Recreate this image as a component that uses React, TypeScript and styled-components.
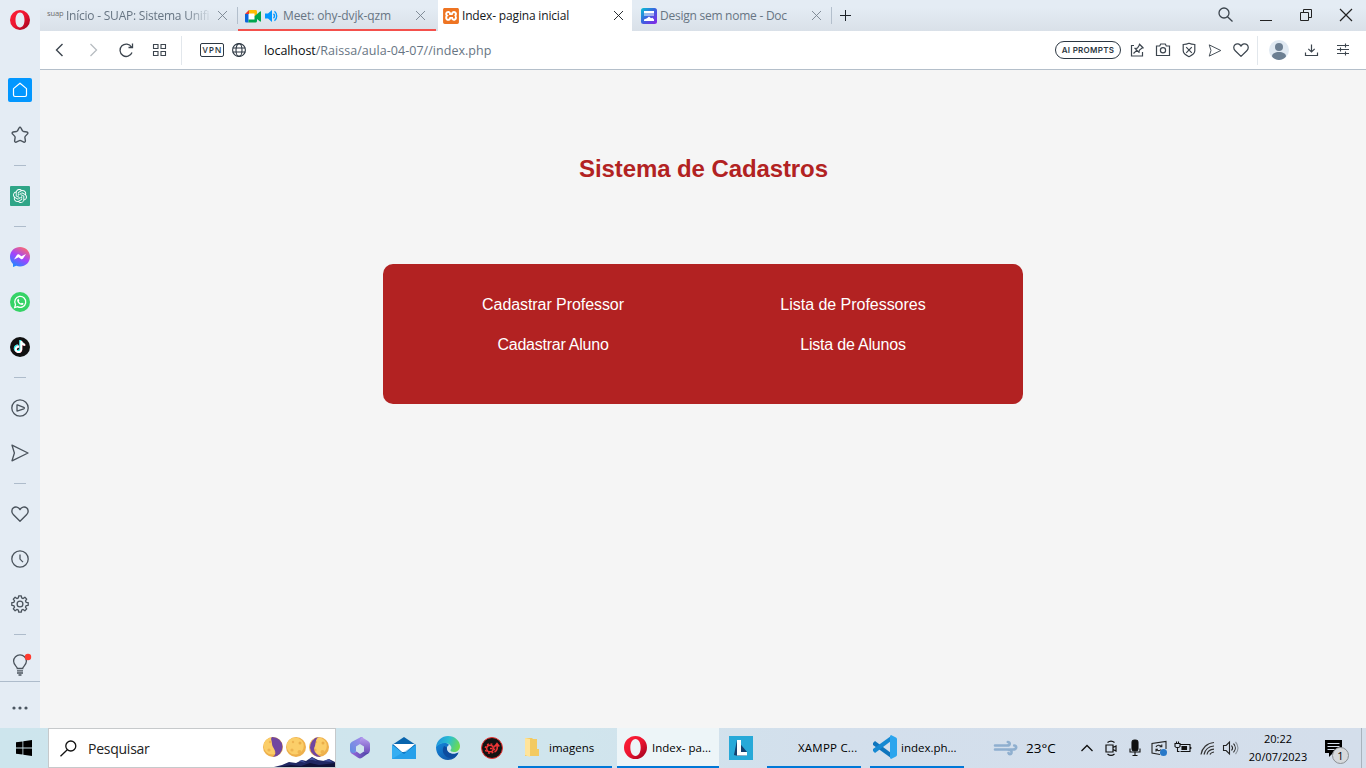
import React from 'react';
import styled, { createGlobalStyle, css } from 'styled-components';
import { SiOpenai, SiXampp, SiTiktok } from 'react-icons/si';

const GlobalStyle = createGlobalStyle`
  * { box-sizing: border-box; }
  body { margin: 0; overflow: hidden; font-family: "Open Sans", "Noto Sans", sans-serif; }
`;

const Desktop = styled.div`
  display: grid;
  grid-template-rows: 728px 40px;
  width: 1366px;
  height: 768px;
`;

const Browser = styled.div`
  display: grid;
  grid-template-columns: 40px 1fr;
  background: #e4ecf4;
`;

const Icon = styled.svg<{ $size?: number; $width?: number; $color?: string; $line?: number }>`
  display: block;
  flex: none;
  width: ${p => p.$width ?? p.$size ?? 16}px;
  height: ${p => p.$size ?? 16}px;
  fill: none;
  stroke: ${p => p.$color ?? '#3c454e'};
  stroke-width: ${p => p.$line ?? 1.2};
  overflow: visible;
`;

const Picture = styled(Icon)`
  stroke: none;
`;

/* ---------- sidebar ---------- */

const Sidebar = styled.aside`
  display: flex;
  flex-direction: column;
`;

const SideItem = styled.div<{ $h: number; $top?: number; $nudge?: boolean }>`
  display: flex;
  align-items: center;
  justify-content: center;
  height: ${p => p.$h}px;
  margin-top: ${p => p.$top ?? 0}px;
  padding-right: ${p => (p.$nudge ? 1 : 0)}px;
`;

const SideDivider = styled.div<{ $h: number }>`
  display: flex;
  align-items: center;
  justify-content: center;
  height: ${p => p.$h}px;
  &::before {
    content: '';
    width: 12px;
    height: 1px;
    background: #aebccb;
  }
`;

const HomeTile = styled.div`
  display: grid;
  place-items: center;
  width: 24px;
  height: 24px;
  border-radius: 2px;
  background: #0297ff;
`;

const AppTile = styled.div<{ $bg: string; $round?: boolean }>`
  display: grid;
  place-items: center;
  width: 20px;
  height: 20px;
  border-radius: ${p => (p.$round ? '50%' : '1px')};
  background: ${p => p.$bg};
  color: #fff;
`;

const TikTokGlyph = styled(SiTiktok)`
  filter: drop-shadow(-0.6px -0.4px 0 #25f4ee) drop-shadow(0.7px 0.5px 0 #fe2c55);
`;

const MoreBar = styled.div`
  display: flex;
  align-items: center;
  justify-content: center;
  height: 47px;
  padding-top: 6px;
  border-top: 1px solid #aebccb;
`;

/* ---------- tab strip ---------- */

const Column = styled.div`
  display: grid;
  grid-template-rows: 31px 39px 1fr;
  min-width: 0;
`;

const TabStrip = styled.div`
  display: flex;
  background: linear-gradient(#e4ecf4 25%, #d9e0e8);
`;

const Tab = styled.div<{ $w: number; $left: number; $right: number; $active?: boolean; $alert?: boolean; $divider?: boolean }>`
  position: relative;
  display: flex;
  align-items: center;
  width: ${p => p.$w}px;
  height: 31px;
  padding: 0 ${p => p.$right}px 0 ${p => p.$left}px;
  color: ${p => (p.$active ? '#14181c' : '#677583')};
  ${p => p.$active && css`background: #fff;`}
  ${p => p.$alert && css`
    margin-right: 2px;
    box-shadow: inset 0 -2px #f4504c;
  `}
  ${p => p.$divider && css`
    &::after {
      content: '';
      position: absolute;
      right: 0;
      top: 7px;
      width: 1px;
      height: 17px;
      background: #b3bfcc;
    }
  `}
`;

const TabTitle = styled.span<{ $gap: number; $ls: number; $fade?: boolean }>`
  flex: 1;
  margin-left: ${p => p.$gap}px;
  font-size: 12px;
  line-height: 16px;
  letter-spacing: ${p => p.$ls}px;
  white-space: nowrap;
  overflow: hidden;
  ${p => p.$fade && css`
    margin-right: 8px;
    mask-image: linear-gradient(90deg, #000 82%, transparent 102%);
  `}
`;

const SuapMark = styled.span`
  width: 17px;
  margin-bottom: 5px;
  color: #6d6d6d;
  font-size: 7.5px;
  line-height: 10px;
  letter-spacing: -0.1px;
`;

const NewTab = styled.div`
  display: flex;
  align-items: center;
  padding-left: 8px;
`;

const WindowButtons = styled.div`
  display: flex;
  align-items: center;
  justify-content: space-between;
  width: 134px;
  height: 30px;
  margin-left: auto;
  margin-right: 14px;
`;

/* ---------- address bar ---------- */

const AddressBar = styled.div`
  display: flex;
  align-items: center;
  background: #fff;
  border-bottom: 1px solid #b4bfca;
`;

const NavGroup = styled.div`
  display: flex;
  gap: 17px;
  width: 142px;
  height: 29px;
  align-items: center;
  padding-left: 12px;
  border-right: 1px solid #e2e7ec;
`;

const VpnBadge = styled.span`
  width: 24px;
  height: 14px;
  margin: 0 8px 0 18px;
  border: 1px solid #2c3742;
  border-radius: 2px;
  color: #2c3742;
  font-size: 8.5px;
  font-weight: 600;
  line-height: 12px;
  letter-spacing: 0.9px;
  text-align: center;
  text-indent: 1px;
`;

const Url = styled.span`
  margin-left: 18px;
  padding-top: 2px;
  color: #677583;
  font-size: 12.5px;
  line-height: 18px;
  white-space: nowrap;
  letter-spacing: 0.04px;
`;

const Host = styled.span`
  color: #0b0e11;
  letter-spacing: -0.08px;
`;

const PageActions = styled.div`
  display: flex;
  align-items: center;
  gap: 10px;
  height: 29px;
  margin-left: auto;
  padding-right: 8px;
  border-right: 1px solid #e2e7ec;
`;

const PromptPill = styled.span`
  width: 66px;
  height: 18px;
  margin-right: -2px;
  border: 1px solid #2c3742;
  border-radius: 9px;
  color: #2c3742;
  font-family: Inter, sans-serif;
  font-size: 8px;
  font-weight: 600;
  line-height: 16px;
  letter-spacing: 0.3px;
  text-align: center;
`;

const ProfileActions = styled.div`
  display: flex;
  align-items: center;
  width: 108px;
  padding-left: 11px;
  gap: 15px;
`;

/* ---------- web page ---------- */

const Page = styled.main`
  display: flex;
  flex-direction: column;
  align-items: center;
  background: #f5f5f5;
  font-family: "Liberation Sans", Arial, sans-serif;
`;

const Heading = styled.h1`
  margin: 85px 0 0 1px;
  color: #b22222;
  font-size: 24px;
  line-height: 28px;
  letter-spacing: -0.1px;
`;

const LinkPanel = styled.nav`
  display: grid;
  grid-template-columns: 300px 300px;
  grid-auto-rows: 40px;
  width: 640px;
  height: 140px;
  margin-top: 81px;
  padding: 21px 20px 19px;
  border-radius: 10px;
  background: #b22222;
`;

const PanelLink = styled.a<{ $ls: number }>`
  color: #fff;
  font-size: 16px;
  line-height: 40px;
  letter-spacing: ${p => p.$ls}px;
  text-align: center;
`;

/* ---------- taskbar ---------- */

const Taskbar = styled.footer`
  display: flex;
  align-items: center;
  background: linear-gradient(90deg, #cde5ed, #d0e5ed 42%, #d3dfec 60%, #d4deeb);
`;

const StartButton = styled.div`
  display: flex;
  justify-content: center;
  width: 48px;
`;

const SearchBox = styled.div`
  display: flex;
  align-items: center;
  width: 288px;
  height: 40px;
  padding-left: 11px;
  border: 1px solid #c6c9cb;
  background: #fff;
  color: #222;
`;

const SearchLabel = styled.span`
  flex: 1;
  margin-left: 11px;
  padding-top: 1px;
  font-size: 14px;
  line-height: 20px;
  letter-spacing: -0.25px;
`;

const PinnedApps = styled.div`
  display: flex;
  align-items: center;
  gap: 20px;
  width: 182px;
  padding-left: 12px;
`;

const TaskButton = styled.div<{ $w: number; $pad: number; $before?: number; $after?: number; $open?: boolean }>`
  display: flex;
  align-items: center;
  width: ${p => p.$w}px;
  height: 40px;
  padding-left: ${p => p.$pad}px;
  margin-left: ${p => p.$before ?? 0}px;
  margin-right: ${p => p.$after ?? 0}px;
  border-bottom: 2px solid #0078d7;
  background: ${p => (p.$open ? '#edf5f8' : 'transparent')};
`;

const TaskLabel = styled.span<{ $gap: number; $ls?: number }>`
  margin-left: ${p => p.$gap}px;
  padding-top: 1px;
  color: #000;
  font-size: 11.5px;
  line-height: 16px;
  letter-spacing: ${p => p.$ls ?? 0}px;
  white-space: nowrap;
`;

const Weather = styled.div`
  display: flex;
  align-items: center;
  gap: 8px;
  margin-left: 30px;
  font-size: 13.5px;
  line-height: 18px;
`;

const Tray = styled.div`
  display: flex;
  align-items: center;
  gap: 8px;
  margin-left: auto;
`;

const Clock = styled.div`
  width: 74px;
  margin-left: -6px;
  font-size: 11px;
  line-height: 18px;
  text-align: center;
  white-space: nowrap;
`;

const Notifications = styled.div`
  position: relative;
  width: 41px;
  height: 40px;
  margin-left: 6px;
  padding: 12px 0 0 4px;
  border-right: 1px solid #a9b3bd;
  margin-right: 4px;
`;

const NotificationCount = styled.span`
  position: absolute;
  left: 11px;
  top: 19px;
  width: 17px;
  height: 17px;
  border: 1px solid #8c9094;
  border-radius: 50%;
  background: #d6d9dc;
  font-size: 11px;
  line-height: 15px;
  text-align: center;
`;

const OperaLogo = ({ size }: { size: number }) => (
  <Picture $size={size} viewBox="0 0 20 20">
    <defs>
      <linearGradient id="opera" x1="0" x2="1" y1="0" y2="1">
        <stop offset="0" stopColor="#ff2038" />
        <stop offset="0.5" stopColor="#ec1530" />
        <stop offset="1" stopColor="#97001c" />
      </linearGradient>
    </defs>
    <path fill="url(#opera)" fillRule="evenodd" d="M10 0a10 10 0 1 0 0 20 10 10 0 0 0 0-20Zm0 2.600c2.800 0 4.500 3.300 4.500 7.400s-1.700 7.400-4.500 7.400S5.500 14.100 5.500 10s1.700-7.400 4.500-7.400Z" />
  </Picture>
);

const Cross = ({ color, size = 9 }: { color?: string; size?: number }) => (
  <Icon $size={size} $color={color} $line={1} viewBox="0 0 10 10">
    <path d="m0 0 10 10M10 0 0 10" />
  </Icon>
);

const Heart = ({ size, color }: { size: number; color?: string }) => (
  <Icon $size={size} $color={color} viewBox="0 0 18 18" $line={1.4}>
    <path d="M9 16.200 2.500 9.800C.2 7.500.5 4.600 2.200 3.100 4.300 1.200 7.600 1.900 9 4.600c1.400-2.700 4.700-3.400 6.800-1.500 1.700 1.500 2 4.400-.3 6.700Z" strokeLinejoin="round" />
  </Icon>
);

const SendArrow = ({ size, width, color }: { size: number; width?: number; color?: string }) => (
  <Icon $size={size} $width={width} $color={color} viewBox="0 0 18 18" $line={1.3}>
    <path d="M1 1.200 17 9 1 16.800 3.400 9Z" strokeLinejoin="round" />
  </Icon>
);

const Moon = ({ x, shade }: { x: number; shade?: string }) => (
  <g transform={`translate(${x} 18)`}>
    <circle r="10" fill="#eeb04c" />
    <circle cx="-.8" cy="-1" r="8.600" fill="#fbce69" />
    <circle cx="-4" cy="3" r="1.600" fill="#eeb451" />
    <circle cx="4" cy="-4" r="1.500" fill="#e9ad49" />
    <circle cx="3.500" cy="5" r="2" fill="#efb44f" />
    <circle cx="-3" cy="-5" r="1.200" fill="#eeb451" />
    {shade && <path d={shade} fill="#7146a0" />}
  </g>
);

const toothPoints = Array.from({ length: 32 }, (_, i) => {
  const step = i % 4;
  const radius = step === 0 || step === 1 ? 8.3 : 6.3;
  const angle = ((Math.floor(i / 4) * 45 + [-9, 9, 15, 30][step] - 90) * Math.PI) / 180;
  return `${(9 + radius * Math.cos(angle)).toFixed(2)},${(9 + radius * Math.sin(angle)).toFixed(2)}`;
}).join(' ');

const sideInk = '#4a535c';

function SidePanel() {
  return (
    <Sidebar>
      <SideItem $h={40}><OperaLogo size={20} /></SideItem>
      <SideItem $h={44} $top={28}>
        <HomeTile>
          <Icon $size={16} $color="#fff" $line={1.2} viewBox="0 0 16 16">
            <path d="M1.500 6.600 8 1.200l6.500 5.400v6.500c0 .9-.6 1.400-1.400 1.400H2.900c-.8 0-1.400-.5-1.400-1.400Z" strokeLinejoin="round" />
          </Icon>
        </HomeTile>
      </SideItem>
      <SideItem $h={46}>
        <Icon $size={18} $color={sideInk} viewBox="0 0 18 18" $line={1.4}>
          <path d="M8.100 1.800c.4-.8 1.400-.8 1.800 0l1.600 3c.2.400.6.700 1 .7l3.400.5c1 .2 1.300 1.200.6 1.900l-2.300 2.500c-.3.300-.4.800-.3 1.200l.5 3.300c.1 1-.8 1.600-1.600 1.200l-3-1.400a1.700 1.700 0 0 0-1.500 0l-3.100 1.400c-.8.400-1.700-.2-1.600-1.200l.5-3.300c.1-.4 0-.9-.3-1.200L1.500 7.900C.8 7.200 1.100 6.200 2.100 6l3.400-.5c.4 0 .8-.3 1-.7Z" strokeLinejoin="round" />
        </Icon>
      </SideItem>
      <SideDivider $h={15} />
      <SideItem $h={45}>
        <AppTile $bg="#2fa587"><SiOpenai size={14} /></AppTile>
      </SideItem>
      <SideDivider $h={16} />
      <SideItem $h={46}>
        <Picture $size={20} viewBox="0 0 20 20">
          <defs>
            <linearGradient id="chat" x1="0.200" x2="0.750" y1="1" y2="0">
              <stop offset="0" stopColor="#168fff" />
              <stop offset="0.500" stopColor="#a044ff" />
              <stop offset="1" stopColor="#ff6b69" />
            </linearGradient>
          </defs>
          <path fill="url(#chat)" d="M10 0c5.700 0 10 4.200 10 9.700s-4.300 9.700-10 9.700c-1.500 0-2.600-.2-3.700-.6L3 20v-3.100C1.200 15.200 0 12.700 0 9.700 0 4.200 4.300 0 10 0Z" />
          <path fill="#fff" d="m4 12.500 2.900-4.600c.5-.8 1.500-.9 2.200-.4l2.300 1.700L16 7l-2.900 4.600c-.5.800-1.500.9-2.200.4l-2.300-1.700Z" />
        </Picture>
      </SideItem>
      <SideItem $h={44}>
        <Picture $size={20} viewBox="0 0 20 20">
          <circle cx="10" cy="10" r="10" fill="#35d366" />
          <path fill="none" stroke="#fff" strokeWidth="1.300" d="m4.700 15.500.8-2.900a5.500 5.500 0 1 1 2 2Z" />
          <path fill="#fff" d="M7.700 7.200c.4-.5.900-.4 1.100 0l.5 1.200c.1.400-.4.700-.5 1 .6 1 1.300 1.600 2.200 2 .4-.2.600-.8 1-.7l1.300.6c.6.500-.2 1.700-1.100 1.800-2.500.1-5.500-3-5-5Z" />
        </Picture>
      </SideItem>
      <SideItem $h={45}>
        <AppTile $bg="#111" $round><TikTokGlyph size={12} /></AppTile>
      </SideItem>
      <SideDivider $h={16} />
      <SideItem $h={45} $nudge>
        <Icon $size={18} $color={sideInk} viewBox="0 0 18 18" $line={1.3}>
          <circle cx="9" cy="9" r="8.200" />
          <path d="M6 6v6.100l6.800-2.300c.8-.3.800-1.200 0-1.500L6.400 5.900Z" strokeLinejoin="round" />
        </Icon>
      </SideItem>
      <SideItem $h={46} $nudge><SendArrow size={18} color={sideInk} /></SideItem>
      <SideDivider $h={15} />
      <SideItem $h={45} $nudge><Heart size={18} color={sideInk} /></SideItem>
      <SideItem $h={45} $nudge>
        <Icon $size={18} $color={sideInk} viewBox="0 0 18 18" $line={1.3}>
          <circle cx="9" cy="9" r="8.200" />
          <path d="M9 4.500v4.600l3 3" />
        </Icon>
      </SideItem>
      <SideItem $h={45} $nudge>
        <Icon $size={18} $color={sideInk} viewBox="0 0 18 18" $line={1.3}>
          <circle cx="9" cy="9" r="2.900" />
          <polygon points={toothPoints} strokeLinejoin="round" />
        </Icon>
      </SideItem>
      <SideDivider $h={16} />
      <SideItem $h={33} $top={6}>
        <Icon $size={22} $color={sideInk} viewBox="0 0 22 22" $line={1.3}>
          <path d="M8.300 14.500c0-2-3.700-3.400-3.700-7.200a6.400 6.400 0 0 1 12.800 0c0 3.800-3.700 5.200-3.700 7.200ZM8 16.800h6M8 19h6M9.500 21h3" />
          <circle cx="19" cy="3" r="3.200" fill="#ff3b30" stroke="none" />
        </Icon>
      </SideItem>
      <MoreBar>
        <Picture $width={16} $size={4} viewBox="0 0 16 4">
          <g fill="#4b5661"><circle cx="2" cy="2" r="1.600" /><circle cx="8" cy="2" r="1.600" /><circle cx="14" cy="2" r="1.600" /></g>
        </Picture>
      </MoreBar>
    </Sidebar>
  );
}

function Tabs() {
  return (
    <TabStrip>
      <Tab $w={198} $left={7} $right={11} $divider>
        <SuapMark>suap</SuapMark>
        <TabTitle $gap={2} $ls={-0.23} $fade>Início - SUAP: Sistema Unifi</TabTitle>
        <Cross color="#77828d" />
      </Tab>
      <Tab $w={198} $left={7} $right={11} $alert>
        <Picture $size={16} viewBox="0 0 16 16">
          <path fill="#fff" d="M3 5h7v7H3Z" />
          <path fill="#0b66da" d="M0 6h3.500v8.500h-2C.6 14.500 0 14 0 13.200Z" />
          <path fill="#e93a2e" d="m0 6 4-4v4Z" />
          <path fill="#fbbc04" d="M4 2h6.500c1 0 1.500.6 1.500 1.500V7l-2.500 1.500V5.500H4Z" />
          <path fill="#00a64f" d="M3.500 11.500h6V8.300L15 3.500c.5-.4 1-.1 1 .5v9c0 .6-.5.800-1 .5l-3-2.400V13c0 .9-.6 1.500-1.500 1.500h-7Z" />
        </Picture>
        <Picture $size={14} viewBox="0 0 14 14">
          <g transform="translate(4 0)">
            <path fill="#0297ff" d="M0 4.500h3L7 1v12L3 9.500H0Z" />
            <path fill="none" stroke="#0297ff" strokeWidth="1.300" d="M8.500 4.800c1.200 1.200 1.200 3.200 0 4.400M9.500 2.200c3 2.500 3 7.100 0 9.600" />
          </g>
        </Picture>
        <TabTitle $gap={8} $ls={-0.1}>Meet: ohy-dvjk-qzm</TabTitle>
        <Cross color="#77828d" />
      </Tab>
      <Tab $w={194} $left={5} $right={9} $active>
        <AppTile16>
          <SiXampp size={16} color="#ee7422" />
        </AppTile16>
        <TabTitle $gap={3} $ls={-0.17}>Index- pagina inicial</TabTitle>
        <Cross color="#14181c" />
      </Tab>
      <Tab $w={200} $left={9} $right={11} $divider>
        <Picture $size={16} viewBox="0 0 16 16">
          <defs>
            <linearGradient id="doc" x1="0" x2="1" y1="0" y2="1">
              <stop offset="0" stopColor="#05c3d2" /><stop offset="0.500" stopColor="#3d5fe0" /><stop offset="1" stopColor="#8b22e6" />
            </linearGradient>
          </defs>
          <rect width="16" height="16" rx="2.500" fill="url(#doc)" />
          <path fill="#fff" d="M3 3h10v2.500H3ZM3 6.500h10v1H3ZM3 13v-1.500l3-1.200 2-1.800 2 1.800 1.500-.5L13 11.500V13Z" />
        </Picture>
        <TabTitle $gap={3} $ls={-0.25}>Design sem nome - Doc</TabTitle>
        <Cross color="#77828d" />
      </Tab>
      <NewTab>
        <Icon $size={11} viewBox="0 0 11 11" $color="#1d2329" $line={1}><path d="M5.500 0v11M0 5.500h11" /></Icon>
      </NewTab>
      <WindowButtons>
        <Icon $size={15} viewBox="0 0 15 15" $line={1.3}><circle cx="6" cy="5" r="5" /><path d="m9.500 8.700 5 4.800" /></Icon>
        <Icon $size={12} viewBox="0 0 12 12" $color="#222"><path d="M-1 11.500h12" strokeWidth="1" /></Icon>
        <Icon $size={12} viewBox="0 0 12 12" $color="#222" $line={1}><path d="M.5 3.500h8v8h-8ZM3.500 3.500v-3h8v8h-3" /></Icon>
        <Cross color="#222" size={12} />
      </WindowButtons>
    </TabStrip>
  );
}

const AppTile16 = styled.div`
  display: flex;
  width: 16px;
  height: 16px;
  border-radius: 3px;
  background: linear-gradient(#ee7422, #ee7422) border-box, #fff;
  background: #fff;
`;

function Address() {
  return (
    <AddressBar>
      <NavGroup>
        <Icon $line={1.4}><path d="M10.500 2 4.500 8l6 6" /></Icon>
        <Icon $line={1.3} $color="#b7bcc1"><path d="m5.500 2 6 6-6 6" /></Icon>
        <Icon $line={1.3}><path d="M14 10.500A6.200 6.200 0 1 1 13.500 5M14.500 1.500v4h-4" /></Icon>
        <Icon $line={1.1}><path d="M2.500 2.500h4.500v4H2.500ZM10 2.500h4.500v4H10ZM2.500 9.500h4.500v4H2.500ZM10 9.500h4.500v4H10Z" /></Icon>
      </NavGroup>
      <VpnBadge>VPN</VpnBadge>
      <Icon $size={14} viewBox="0 0 14 14" $color="#2c3742" $line={1.1}>
        <circle cx="7" cy="7" r="6.400" /><ellipse cx="7" cy="7" rx="3" ry="6.400" /><path d="M.6 5h12.800M.6 9h12.800" />
      </Icon>
      <Url><Host>localhost</Host>/Raissa/aula-04-07//index.php</Url>
      <PageActions>
        <PromptPill>AI PROMPTS</PromptPill>
        <Icon $line={1.2}><path d="M5 3.500H2.500v10.500h11V10M4.500 11.500l3.200-3.200M5.500 5.800l5 5M6.200 6.600 8.500 6l2.300-3.500 3 3L10.500 8l-.8 2.200M10 1.800l4.500 4.500" /></Icon>
        <Icon $line={1.2}><path d="M1.500 4h3.200l1-2h4.600l1 2h3.200v9.500h-13Z" /><circle cx="8" cy="8.300" r="2.600" /></Icon>
        <Icon $line={1.2}><path d="M8 1.300c2 1 4 1.200 5.800 1.200v6.300c0 3-3 4.600-5.800 5.900-2.800-1.300-5.800-2.900-5.800-5.900V2.500C4 2.500 6 2.300 8 1.300ZM5.200 5.200l5.600 5.600M10.800 5.200l-5.600 5.600" /></Icon>
        <SendArrow size={13} width={16} />
        <Heart size={16} />
      </PageActions>
      <ProfileActions>
        <Picture $size={20} viewBox="0 0 20 20">
          <circle cx="10" cy="10" r="10" fill="#e0e9f2" />
          <circle cx="10" cy="7" r="4" fill="#6c7f92" />
          <path fill="#6c7f92" d="M3 16.500c0-3 3-4.500 7-4.500s7 1.500 7 4.500c-1.500 2-4.300 3.500-7 3.500s-5.500-1.500-7-3.500Z" />
        </Picture>
        <Icon $line={1.2}><path d="M7.500 2.500v7M4.300 6.800 7.500 10l3.200-3.200M1.500 10.500v3h12v-3" /></Icon>
        <Icon $line={1.1}><path d="M2 3.500h12M2 7.500h12M2 11.500h12M10.500 1.500v4M5.500 5.500v4M10.500 9.500v4" /></Icon>
      </ProfileActions>
    </AddressBar>
  );
}

function WindowsTaskbar() {
  return (
    <Taskbar>
      <StartButton>
        <Picture $size={16} viewBox="0 0 16 16"><path fill="#000" d="m0 2.300 6.500-.9v6.200H0ZM7.300 1.300 16 0v7.600H7.300ZM0 8.400h6.500v6.200L0 13.700ZM7.300 8.400H16V16l-8.700-1.300Z" /></Picture>
      </StartButton>
      <SearchBox>
        <Icon $size={17} viewBox="0 0 17 17" $color="#111" $line={1.3}><circle cx="10.800" cy="6" r="5" /><path d="M7.300 9.700.5 16.300" /></Icon>
        <SearchLabel>Pesquisar</SearchLabel>
        <Picture $width={72} $size={38} viewBox="0 0 72 38">
          <Moon x={10} shade="M-1-10a10 10 0 0 1 1 20c6-5-1-9-1-13s-2-5 0-7Z" />
          <Moon x={33} />
          <Moon x={56} shade="M0-10a10 10 0 0 0 2 20C-5 6-6 2-4-1c1-3 0-7 4-9Z" />
          <path fill="#202863" d="m11 38 8-2 7-3 7 1 6-3 4 1 6-4 6 3 6 1 5-2 6 3v5Z" />
          <path fill="#42519c" d="m36 32 3-1 4 3-4-1ZM46 31l3-3 5 4-4-1ZM60 32l6-2 3 3Z" />
          <path fill="#0e1237" d="m16 38 12-2 10 1 9-3 9 2 16-2v4Z" />
        </Picture>
      </SearchBox>
      <PinnedApps>
        <Picture $size={24} viewBox="0 0 24 24">
          <defs>
            <linearGradient id="ringTop" x1="0" x2="1" y1="1" y2="0"><stop stopColor="#5b8ee0" /><stop offset="1" stopColor="#a98aea" /></linearGradient>
            <linearGradient id="ringRight" x1="0" x2="0" y1="0" y2="1"><stop stopColor="#b9a0f0" /><stop offset="1" stopColor="#6a4ab8" /></linearGradient>
            <linearGradient id="ringLow" x1="0" x2="1" y1="0" y2="0"><stop stopColor="#a06ae0" /><stop offset="1" stopColor="#4443a0" /></linearGradient>
          </defs>
          <path fill="url(#ringTop)" d="M12 1.500c1-.6 2-.5 3 0-2 1.500-3 3-3 5.500v1L8 10.500V15c0 2-2.500 3.500-4 2.500-1.300-.8-2-2-2-3.500V9c0-1.500.7-2.500 2-3.300Z" />
          <path fill="url(#ringRight)" d="M14 1.200 20 5c1.300.8 2 1.800 2 3.300V14c0 1.500-.8 2.700-2 3.400-1.500.8-4-.4-4-2.400v-4.500L12 8V6c0-2 .5-3.500 2-4.800Z" />
          <path fill="url(#ringLow)" d="M2.200 15c1 2 3 2.500 5 1.400l1.300-.9L12 18l4-2.500c2 2 4 2 5.500.5-.4.700-.8 1.200-1.500 1.600L14 21.800c-1.300.8-2.700.8-4 0l-6-4C3 17.200 2.300 16.200 2.200 15Z" />
        </Picture>
        <Picture $size={24} viewBox="0 0 24 24">
          <path fill="#0864ad" d="M0 9 12 1l12 8v13H0Z" />
          <path fill="#fff" d="M1 8h22l-9 8h-4Z" />
          <path fill="#35aef2" d="M0 8.500 12 18 24 8.500V23H0Z" />
          <path fill="#1490df" d="m0 23 24-14.500V23Z" opacity=".45" />
        </Picture>
        <Picture $size={24} viewBox="0 0 24 24">
          <defs>
            <linearGradient id="edgeTop" x1="0" x2="1" y1="0.200" y2="0.500"><stop stopColor="#1e8fe1" /><stop offset="0.500" stopColor="#2bbfd0" /><stop offset="1" stopColor="#6ddb50" /></linearGradient>
            <linearGradient id="edgeLow" x1="0" x2="1" y1="0" y2="1"><stop stopColor="#1489dc" /><stop offset="1" stopColor="#114a9b" /></linearGradient>
          </defs>
          <path fill="url(#edgeLow)" d="M0 11c2-4 11-6 13-2-3 1-4 8 3 9 3 .5 5-.5 6.500-1.500C21 21 17 24 12 24 5 24 0 18.500 0 11Z" />
          <path fill="url(#edgeTop)" d="M0 11C1 4 6 0 12 0c7 0 12 5 12 10 0 4-3 6-6 6-2.500 0-4-1-3.500-2 1-1 1.500-3-.5-5-3-3-10-2.500-14 2Z" />
          <path fill="#0d4c9e" d="M8 10c-3 5 0 11 6 12 4 .2 7-2 8.500-5.500C16 20 10 16 11 11.500Z" />
        </Picture>
        <Picture $size={24} viewBox="0 0 24 24">
          <circle cx="12" cy="12" r="10.500" fill="#131313" stroke="#ec3434" strokeWidth="1" />
          <g fill="none" stroke="#f23636">
            <circle cx="10" cy="12.500" r="3.300" strokeWidth="1.500" />
            <circle cx="10" cy="12.500" r="4.700" strokeWidth="1.400" strokeDasharray="1.900 1.790" />
            <path d="M10 12.500h2.500M14.500 16c2.500-1 3-4 2.500-7M14.800 10.500l2.200-3 2.300 3" strokeWidth="1.600" />
          </g>
        </Picture>
      </PinnedApps>
      <TaskButton $w={94} $pad={6} $after={5}>
        <Picture $width={16} $size={20} viewBox="0 0 16 20"><path fill="#f3ca61" d="M1 1h7l1 1h4v10h2v7H1Z" /><path fill="#ffe49b" d="m1 1 5 1v18l-5-2Z" /></Picture>
        <TaskLabel $gap={9}>imagens</TaskLabel>
      </TaskButton>
      <TaskButton $w={102} $pad={7} $after={10} $open>
        <OperaLogo size={23} />
        <TaskLabel $gap={5}>Index- pa...</TaskLabel>
      </TaskButton>
      <Picture $size={24} viewBox="0 0 24 24">
        <rect width="24" height="24" fill="#27a9d8" />
        <path fill="#14406f" d="m8 4-3 15 4 1 9-.5V16Z" />
        <path fill="#fff" d="M8 4h4v12h6v3.500H8Z" />
      </Picture>
      <TaskButton $w={94} $pad={31} $before={14} $after={9}>
        <TaskLabel $gap={0} $ls={0.22}>XAMPP C...</TaskLabel>
      </TaskButton>
      <TaskButton $w={94} $pad={3}>
        <Picture $size={24} viewBox="0 0 24 24">
          <path fill="#0f75bd" d="m0 8 2-2 16 12v5L0 10Z" />
          <path fill="#1689d2" d="m0 16 2 2L18 6V1L0 14Z" />
          <path fill="#2ba5ee" d="m18 0 5 2.500c.6.300 1 .9 1 1.500v16c0 .6-.4 1.200-1 1.500L18 24l-1-1V1Z" />
        </Picture>
        <TaskLabel $gap={4}>index.ph...</TaskLabel>
      </TaskButton>
      <Weather>
        <Icon $width={24} $size={16} viewBox="0 0 24 16" $color="#8fafcf" $line={2.6}>
          <path d="M1 5.500h12c3.500 0 3.500-3.500.8-3.500M1 9.500h18c4 0 4-4 1.200-4M13 9.500c4 0 5 1.500 4.500 3.500-.5 1.500-2.500 1.500-3 0" strokeLinecap="round" />
        </Icon>
        23°C
      </Weather>
      <Tray>
        <Icon $color="#111" $line={1.3}><path d="m2.500 11 5.500-5.500L13.500 11" /></Icon>
        <Icon $color="#111" $line={1.2}><path d="M3 5h7v7H3ZM10 7.500l3-1.500v5l-3-1.500M4.500 2.500c2-1.700 5-1.700 7 0M4.500 14c2 1.700 5 1.700 7 0" /></Icon>
        <Icon $color="#111" $line={1.1}><rect x="5" y="0" width="6" height="11" rx="2.500" fill="#111" /><path d="M3 8.500v3.500h10V8.500M8 12v3.500M5.500 15.500h5" /></Icon>
        <Icon $color="#222" $line={1.1}><path d="M9 14.500 1 13V3.500l14-2V9M5 7c.6-2 4-2.500 5.500-.5M10.800 4.500v2.300H8.500M10 9.500c-1 1.500-3.500 1.500-4.800 0M5 11.500V9.300h2" /><circle cx="12.500" cy="12.500" r="3.500" fill="#2878c8" stroke="none" /></Icon>
        <Icon $color="#111" $line={1.1}><path d="M4.500 4.500h10.500v7H5.500M15.800 7v2M0 3.500h5v3c-1 1.500-4 1.500-5 0ZM1.500 1.500v2M3.500 1.500v2M2.500 8v3.500h2" /><path fill="#111" d="M7 6.500h4.500v3H7Z" /></Icon>
        <Icon $color="#333" $line={1.2}><path d="M2 14.500C3 8 8 3 15 2.500M5 14.500C6 10 9.500 6.500 15 6M8 14.500c.5-3 3-5 7-5.300M11 14.500c.3-1.200 1.500-2 4-2.500" /></Icon>
        <Icon $color="#222" $line={1.1}><path d="M.5 5.500h2.600L6.500 2v12L3.100 10.500H.5ZM8.500 5.500c1.300 1.500 1.300 3.500 0 5M10.500 3.700c2.400 2.500 2.400 6.100 0 8.600" /><path stroke="#8c949c" d="M12.500 2c3.300 3.500 3.300 8.500 0 12" /></Icon>
        <Clock>20:22<br />20/07/2023</Clock>
      </Tray>
      <Notifications>
        <Picture $size={17} viewBox="0 0 17 17"><path fill="#000" d="M0 0h17v13H8l-4 4v-4H0Z" /><path stroke="#d4deeb" strokeWidth="1.200" d="M2.500 3.500h12M2.500 6.500h12M2.500 9.500h7" /></Picture>
        <NotificationCount>1</NotificationCount>
      </Notifications>
    </Taskbar>
  );
}

export default function App() {
  return (
    <Desktop>
      <GlobalStyle />
      <Browser>
        <SidePanel />
        <Column>
          <Tabs />
          <Address />
          <Page>
            <Heading>Sistema de Cadastros</Heading>
            <LinkPanel>
              <PanelLink $ls={-0.07}>Cadastrar Professor</PanelLink>
              <PanelLink $ls={-0.03}>Lista de Professores</PanelLink>
              <PanelLink $ls={-0.24}>Cadastrar Aluno</PanelLink>
              <PanelLink $ls={-0.2}>Lista de Alunos</PanelLink>
            </LinkPanel>
          </Page>
        </Column>
      </Browser>
      <WindowsTaskbar />
    </Desktop>
  );
}
